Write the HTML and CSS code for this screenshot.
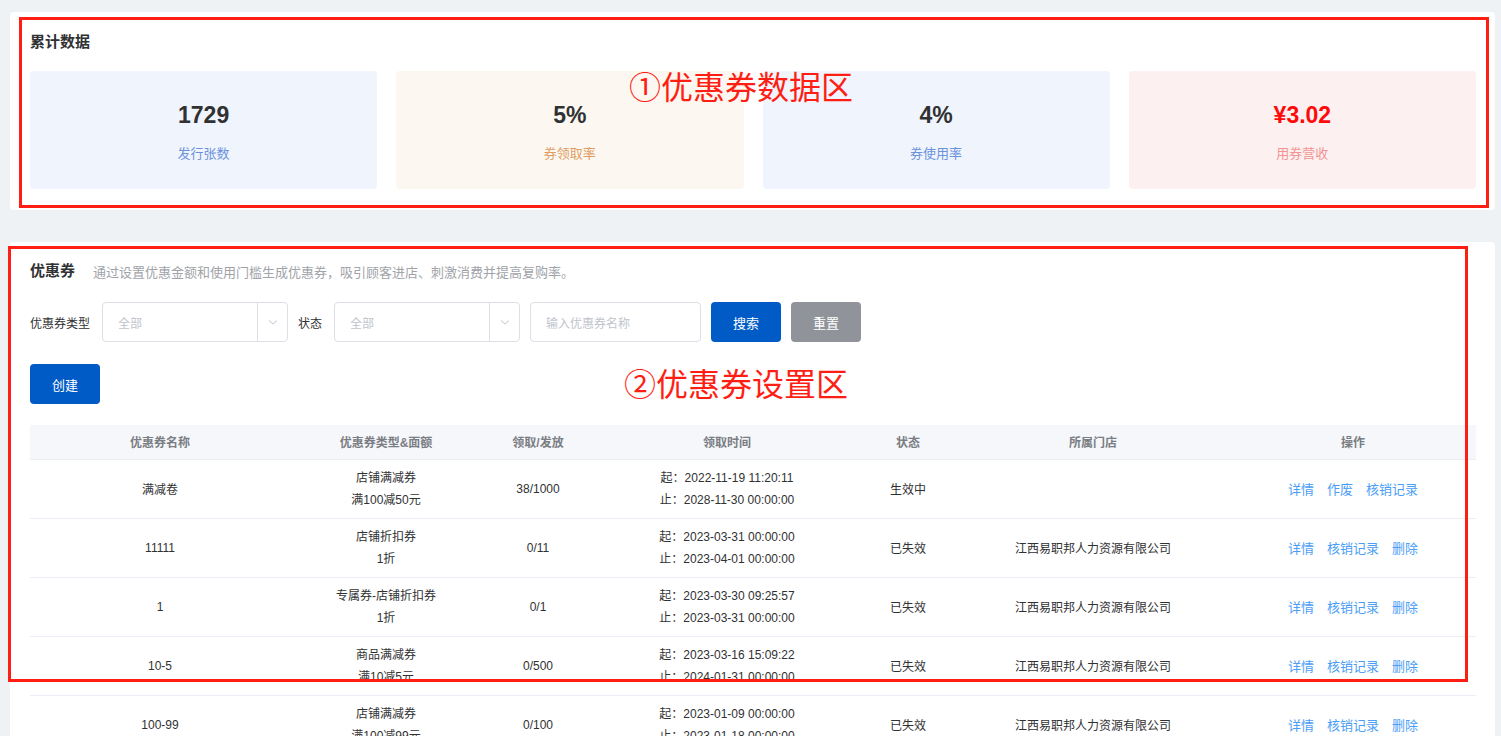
FILE: index.html
```html
<!DOCTYPE html>
<html lang="zh">
<head>
<meta charset="utf-8">
<title>优惠券</title>
<link rel="stylesheet" href="styles.css">
</head>
<body>
<div class="page">
  <section class="card stats-card">
    <h2 class="card-title">累计数据</h2>
    <div class="stats">
      <div class="stat stat-blue"><div class="stat-value">1729</div><div class="stat-label">发行张数</div></div>
      <div class="stat stat-orange"><div class="stat-value">5%</div><div class="stat-label">券领取率</div></div>
      <div class="stat stat-blue"><div class="stat-value">4%</div><div class="stat-label">券使用率</div></div>
      <div class="stat stat-red"><div class="stat-value">¥3.02</div><div class="stat-label">用券营收</div></div>
    </div>
  </section>

  <section class="card coupon-card">
    <div class="coupon-head">
      <h2 class="card-title">优惠券</h2>
      <span class="desc">通过设置优惠金额和使用门槛生成优惠券，吸引顾客进店、刺激消费并提高复购率。</span>
    </div>
    <div class="filters">
      <label class="f-label">优惠券类型</label>
      <div class="select"><span class="ph">全部</span><span class="arrow"><svg width="12" height="12" viewBox="0 0 12 12"><path d="M2 4.5 L6 8 L10 4.5" fill="none" stroke="#c0c4cc" stroke-width="1"/></svg></span></div>
      <label class="f-label">状态</label>
      <div class="select"><span class="ph">全部</span><span class="arrow"><svg width="12" height="12" viewBox="0 0 12 12"><path d="M2 4.5 L6 8 L10 4.5" fill="none" stroke="#c0c4cc" stroke-width="1"/></svg></span></div>
      <div class="input"><span class="ph">输入优惠券名称</span></div>
      <button class="btn btn-primary">搜索</button>
      <button class="btn btn-gray">重置</button>
    </div>
    <div class="actions-row"><button class="btn btn-primary">创建</button></div>

    <table class="tbl">
      <colgroup>
        <col style="width:260px"><col style="width:192px"><col style="width:112px"><col style="width:266px"><col style="width:96px"><col style="width:274px"><col>
      </colgroup>
      <thead>
        <tr><th>优惠券名称</th><th>优惠券类型&amp;面额</th><th>领取/发放</th><th>领取时间</th><th>状态</th><th>所属门店</th><th>操作</th></tr>
      </thead>
      <tbody>
        <tr>
          <td>满减卷</td>
          <td><div class="l2">店铺满减券</div><div class="l2">满100减50元</div></td>
          <td>38/1000</td>
          <td><div class="l2">起：2022-11-19 11:20:11</div><div class="l2">止：2028-11-30 00:00:00</div></td>
          <td>生效中</td>
          <td></td>
          <td class="ops"><a>详情</a><a>作废</a><a>核销记录</a></td>
        </tr>
        <tr>
          <td>11111</td>
          <td><div class="l2">店铺折扣券</div><div class="l2">1折</div></td>
          <td>0/11</td>
          <td><div class="l2">起：2023-03-31 00:00:00</div><div class="l2">止：2023-04-01 00:00:00</div></td>
          <td>已失效</td>
          <td>江西易职邦人力资源有限公司</td>
          <td class="ops"><a>详情</a><a>核销记录</a><a>删除</a></td>
        </tr>
        <tr>
          <td>1</td>
          <td><div class="l2">专属券-店铺折扣券</div><div class="l2">1折</div></td>
          <td>0/1</td>
          <td><div class="l2">起：2023-03-30 09:25:57</div><div class="l2">止：2023-03-31 00:00:00</div></td>
          <td>已失效</td>
          <td>江西易职邦人力资源有限公司</td>
          <td class="ops"><a>详情</a><a>核销记录</a><a>删除</a></td>
        </tr>
        <tr>
          <td>10-5</td>
          <td><div class="l2">商品满减券</div><div class="l2">满10减5元</div></td>
          <td>0/500</td>
          <td><div class="l2">起：2023-03-16 15:09:22</div><div class="l2">止：2024-01-31 00:00:00</div></td>
          <td>已失效</td>
          <td>江西易职邦人力资源有限公司</td>
          <td class="ops"><a>详情</a><a>核销记录</a><a>删除</a></td>
        </tr>
        <tr>
          <td>100-99</td>
          <td><div class="l2">店铺满减券</div><div class="l2">满100减99元</div></td>
          <td>0/100</td>
          <td><div class="l2">起：2023-01-09 00:00:00</div><div class="l2">止：2023-01-18 00:00:00</div></td>
          <td>已失效</td>
          <td>江西易职邦人力资源有限公司</td>
          <td class="ops"><a>详情</a><a>核销记录</a><a>删除</a></td>
        </tr>
      </tbody>
    </table>
  </section>

  <div class="mark mark-1"></div>
  <div class="mark-text mark-text-1">①优惠券数据区</div>
  <div class="mark mark-2"></div>
  <div class="mark-text mark-text-2">②优惠券设置区</div>
</div>
</body>
</html>
```

FILE: styles.css
```css
* { box-sizing: border-box; }
html, body { margin: 0; padding: 0; }
body {
  background: #eff2f5;
  font-family: "Liberation Sans", "Noto Sans CJK SC", sans-serif;
  color: #303133;
  overflow: hidden;
  height: 736px;
}
.page {
  position: relative;
  padding: 12px 6px 0 10px;
}
.card {
  background: #fff;
  border-radius: 4px;
}
.card-title {
  margin: 0;
  font-size: 15px;
  line-height: 20px;
  font-weight: bold;
  color: #303133;
}
.stats-card {
  height: 198px;
  padding: 20px 19px 21px 20px;
  margin-bottom: 32px;
}
.stats {
  margin-top: 19px;
  display: grid;
  grid-template-columns: repeat(4, 1fr);
  column-gap: 19px;
}
.stat {
  height: 118px;
  border-radius: 4px;
  display: flex;
  flex-direction: column;
  align-items: center;
  padding-top: 30px;
}
.stat-value {
  font-size: 23px;
  line-height: 28px;
  font-weight: bold;
  color: #303133;
}
.stat-label {
  margin-top: 17px;
  font-size: 13px;
  line-height: 16px;
}
.stat-blue { background: #f0f4fc; }
.stat-blue .stat-label { color: #6b93dc; }
.stat-orange { background: #fcf8f1; }
.stat-orange .stat-label { color: #e09c64; }
.stat-red { background: #fcf0f0; }
.stat-red .stat-value { color: #ff0a0a; }
.stat-red .stat-label { color: #f29494; }

.coupon-card {
  padding: 19px 19px 0 20px;
  height: 500px;
}
.coupon-head {
  display: flex;
  align-items: center;
  gap: 18px;
  height: 20px;
}
.desc {
  font-size: 13px;
  color: #a0a3a8;
}
.filters {
  margin-top: 21px;
  display: flex;
  align-items: center;
  height: 40px;
}
.f-label {
  font-size: 12px;
  color: #303133;
  margin-right: 12px;
}
.select {
  width: 186px;
  height: 40px;
  border: 1px solid #dcdfe6;
  border-radius: 4px;
  display: flex;
  align-items: center;
  margin-right: 10px;
}
.select .ph { flex: 1; padding-left: 15px; }
.ph { font-size: 12px; color: #c0c4cc; }
.arrow {
  width: 30px;
  height: 38px;
  border-left: 1px solid #dcdfe6;
  display: flex;
  align-items: center;
  justify-content: center;
}
.input {
  width: 171px;
  height: 40px;
  border: 1px solid #dcdfe6;
  border-radius: 4px;
  display: flex;
  align-items: center;
  padding-left: 15px;
  margin-right: 10px;
}
.btn {
  width: 70px;
  height: 40px;
  border: none;
  border-radius: 4px;
  color: #fff;
  font-size: 13px;
  font-family: inherit;
  padding: 0;
}
.btn-primary { background: #005bc6; }
.btn-gray { background: #909399; margin-left: 10px; }
.actions-row { margin-top: 22px; height: 40px; }

.tbl {
  margin-top: 21px;
  width: 1446px;
  border-collapse: collapse;
  table-layout: fixed;
  font-size: 12px;
}
.tbl th {
  background: #f5f7fa;
  height: 34px;
  color: #7a7d83;
  font-weight: bold;
  text-align: center;
  border-bottom: 1px solid #ebeef5;
  padding: 0;
}
.tbl td {
  height: 59px;
  text-align: center;
  border-bottom: 1px solid #ebeef5;
  color: #303133;
  padding: 0;
}
.l2 { line-height: 22px; }
.ops a {
  color: #4b9ef5;
  margin: 0 6.5px;
  font-size: 13px;
}

.mark {
  position: absolute;
  border: 3px solid #ff1e14;
  pointer-events: none;
}
.mark-1 { left: 19px; top: 17px; width: 1470px; height: 191px; }
.mark-2 { left: 8px; top: 246px; width: 1460px; height: 436px; }
.mark-text {
  position: absolute;
  color: #ff1e14;
  font-size: 32px;
  line-height: 36px;
  font-family: "Noto Sans CJK SC", sans-serif;
  white-space: nowrap;
}
.mark-text-1 { left: 629px; top: 67px; }
.mark-text-2 { left: 624px; top: 364px; }
```
